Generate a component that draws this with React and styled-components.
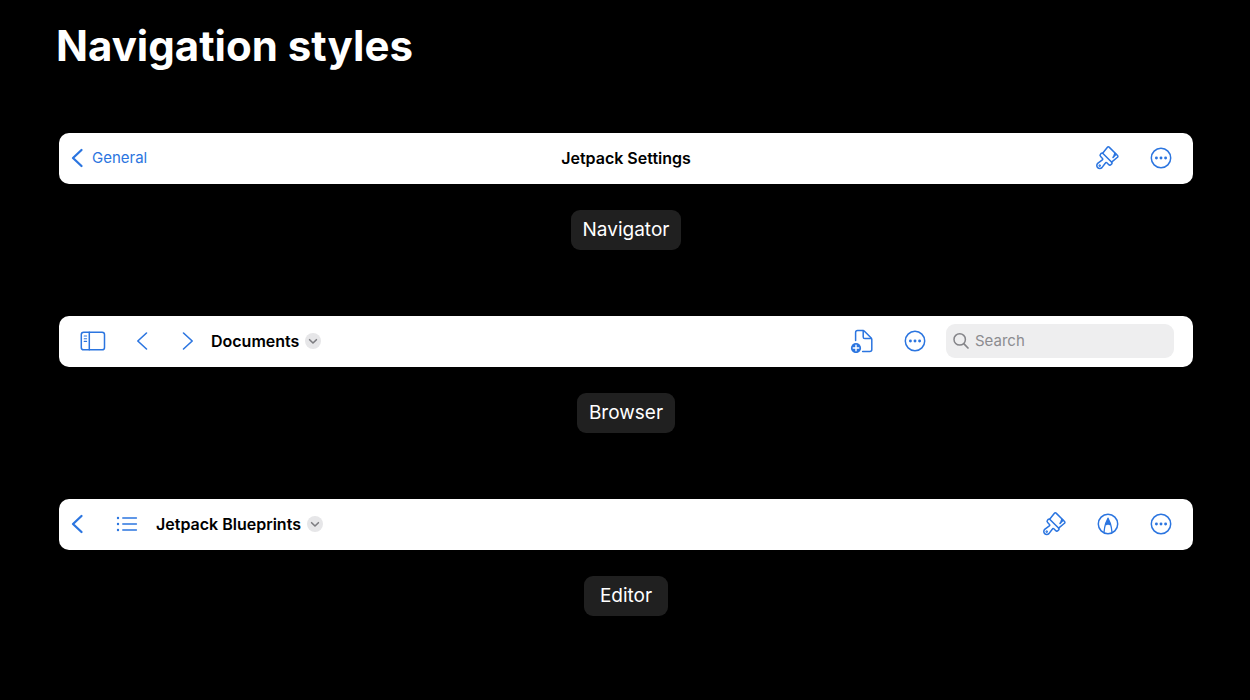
import React from "react";
import styled, { createGlobalStyle } from "styled-components";

const GlobalStyle = createGlobalStyle`
  *, *::before, *::after { box-sizing: border-box; }
  body {
    margin: 0;
    background: #000;
    color: #fff;
    font-family: Inter, "Liberation Sans", sans-serif;
  }
`;

const Page = styled.main`
  padding: 18px 57px 40px 59px;
`;

const Heading = styled.h1`
  margin: 0 0 59px -3px;
  font-size: 42px;
  line-height: 56px;
  font-weight: 700;
`;

const Styles = styled.div`
  display: flex;
  flex-direction: column;
  gap: 66px;
`;

const Example = styled.section`
  display: flex;
  flex-direction: column;
  align-items: center;
  gap: 26px;
`;

const Bar = styled.header`
  align-self: stretch;
  display: grid;
  grid-template-columns: 1fr auto 1fr;
  align-items: center;
  min-height: 51px;
  padding: 0 11px 2px;
  border-radius: 10px;
  background: #fff;
  color: #000;
`;

const Group = styled.div`
  display: flex;
  align-items: center;
  gap: ${(p) => p.$gap || 0}px;
  padding-left: ${(p) => p.$inset || 0}px;
  padding-right: ${(p) => p.$endInset || 0}px;
  justify-content: ${(p) => (p.$end ? "flex-end" : "flex-start")};
`;

const BarTitle = styled.h2`
  margin: 0;
  font-size: 16px;
  line-height: 24px;
  font-weight: 600;
  white-space: nowrap;
`;

const IconButton = styled.button`
  display: flex;
  align-items: center;
  padding: 0;
  border: 0;
  background: none;
  color: #2b75e0;
  cursor: pointer;
`;

const BackLink = styled.a`
  display: flex;
  align-items: center;
  gap: 8px;
  color: #2b75e0;
  font-size: 15px;
  line-height: 24px;
  text-decoration: none;
`;

const TitleMenu = styled.button`
  display: flex;
  align-items: center;
  gap: 6px;
  padding: 0;
  border: 0;
  background: none;
  color: #000;
  font: 600 16px/24px Inter, "Liberation Sans", sans-serif;
  white-space: nowrap;
  cursor: pointer;
`;

const Search = styled.label`
  display: flex;
  align-items: center;
  gap: 6px;
  width: 228px;
  height: 34px;
  padding: 0 7px;
  border-radius: 9px;
  background: #eeeeef;
  color: #848488;
`;

const SearchInput = styled.input`
  width: 100%;
  min-width: 0;
  padding: 0;
  border: 0;
  outline: 0;
  background: none;
  color: #000;
  font: 400 15px/24px Inter, "Liberation Sans", sans-serif;
  &::placeholder { color: #8c8c90; opacity: 1; }
`;

const Tag = styled.p`
  margin: 0;
  min-width: 84px;
  padding: 0 12px;
  border-radius: 9px;
  background: #202020;
  font-size: 19px;
  line-height: 40px;
  text-align: center;
`;

const Drawing = styled.svg`
  display: block;
  flex: none;
  fill: none;
  stroke: currentColor;
  stroke-width: ${(p) => p.$weight || 1.5};
  stroke-linecap: round;
  stroke-linejoin: round;
`;

function Icon({ w, h, weight, children }) {
  return (
    <Drawing width={w} height={h} viewBox={`0 0 ${w} ${h}`} $weight={weight} aria-hidden="true">
      {children}
    </Drawing>
  );
}

const BackIcon = () => (
  <Icon w={14} h={20} weight={2.3}>
    <path d="M11.5 2 3 10l8.500 8" />
  </Icon>
);

const PreviousIcon = () => (
  <Icon w={12} h={20} weight={1.6}>
    <path d="M10.500 2 1.800 10l8.700 8" />
  </Icon>
);

const NextIcon = () => (
  <Icon w={12} h={20} weight={1.6}>
    <path d="m1.500 2 8.700 8-8.700 8" />
  </Icon>
);

const BrushIcon = () => (
  <Icon w={24} h={26} weight={1.5}>
    <g transform="translate(11.300 13) rotate(45)">
      <path d="M-6 -.8l-.8-7.600c-.1-.8.4-1.300 1.100-1.300H6.200c.8 0 1.300.6 1.200 1.300l-.7 7.600" />
      <path d="M-5.900-.8H6.900c.7 0 1.100.4 1.100 1.100v.9c0 1.100-.7 1.800-1.800 1.800H3.800c-.7 0-1 .5-.9 1.100l.8 5.800a3 3 0 1 1-6 0l.8-5.800c.1-.6-.2-1.100-.9-1.100h-2.600c-1.100 0-1.800-.7-1.800-1.800v-.9c0-.7.300-1.100.9-1.100z" />
      <path d="M4.300-9.500v4.300M4.300-6.300 2.600-9.500" />
      <circle cx="0.700" cy="10" r="0.500" />
    </g>
  </Icon>
);

const MoreIcon = () => (
  <Icon w={22} h={22}>
    <circle cx="11" cy="11" r="9.700" />
    <g fill="currentColor" stroke="none">
      <circle cx="6.400" cy="11" r="1.450" />
      <circle cx="11" cy="11" r="1.450" />
      <circle cx="15.600" cy="11" r="1.450" />
    </g>
  </Icon>
);

const SidebarIcon = () => (
  <Icon w={26} h={20}>
    <rect x="1.300" y="1.200" width="23.200" height="17.600" rx="2.400" />
    <path d="M9.300 1.200v17.600" />
    <path d="M4.200 5h2.400M4.200 7.700h2.400M4.200 10.400h2.400" strokeWidth="1.100" />
  </Icon>
);

const NewDocumentIcon = () => (
  <Icon w={24} h={24}>
    <path d="M6.600 11.500V3.400c0-1.200.8-2 2-2h5.200c.6 0 1 .2 1.400.6l7 7c.4.400.6.9.6 1.500v10.100c0 1.200-.8 2-2 2h-7.200" />
    <path d="M14.200 1.600v6.400c0 1 .6 1.600 1.600 1.600h6.400" />
    <circle cx="7" cy="19" r="5.100" fill="currentColor" stroke="none" />
    <path d="M7 16.200v5.600M4.200 19h5.600" stroke="#fff" strokeWidth="1.400" />
  </Icon>
);

const ListIcon = () => (
  <Icon w={22} h={18}>
    <path d="M6.800 3h13.600M6.800 9h13.600M6.800 15h13.600" />
    <g fill="currentColor" stroke="none">
      <circle cx="2" cy="3" r="1.200" />
      <circle cx="2" cy="9" r="1.200" />
      <circle cx="2" cy="15" r="1.200" />
    </g>
  </Icon>
);

const MarkupIcon = () => (
  <Icon w={22} h={22}>
    <circle cx="11" cy="11" r="9.700" />
    <path d="M7 19.400c.3-3.400 1-7 1.700-9.200L11 5.200l2.300 5c.7 2.200 1.400 5.800 1.700 9.200" strokeWidth="1.300" />
    <path d="M11 5 8.300 11.600c.9.700 1.800.7 2.700 0 .9.700 1.800.7 2.700 0z" fill="currentColor" stroke="none" />
  </Icon>
);

const SearchIcon = () => (
  <Icon w={16} h={18}>
    <circle cx="6.700" cy="7.400" r="5.700" />
    <path d="m11 11.800 4 4.200" strokeWidth="1.700" />
  </Icon>
);

const DisclosureIcon = () => (
  <Icon w={16} h={16} weight={1.6}>
    <circle cx="8" cy="8" r="8" fill="#e6e6e8" stroke="none" />
    <path d="M4.600 6.700 8 10l3.400-3.300" stroke="#7c7c80" />
  </Icon>
);

function Action({ label, children }) {
  return (
    <IconButton type="button" aria-label={label}>
      {children}
    </IconButton>
  );
}

export default function App() {
  return (
    <>
      <GlobalStyle />
      <Page>
        <Heading>Navigation styles</Heading>
        <Styles>
          <Example>
            <Bar>
              <Group>
                <BackLink href="#general">
                  <BackIcon />
                  General
                </BackLink>
              </Group>
              <BarTitle>Jetpack Settings</BarTitle>
              <Group $end $gap={31} $endInset={10}>
                <Action label="Format"><BrushIcon /></Action>
                <Action label="More"><MoreIcon /></Action>
              </Group>
            </Bar>
            <Tag>Navigator</Tag>
          </Example>

          <Example>
            <Bar>
              <Group $inset={10}>
                <Group $gap={30}>
                  <Action label="Show sidebar"><SidebarIcon /></Action>
                  <Group $gap={34}>
                    <Action label="Previous"><PreviousIcon /></Action>
                    <Action label="Next"><NextIcon /></Action>
                  </Group>
                </Group>
                <Group $inset={17}>
                  <TitleMenu type="button">
                    Documents
                    <DisclosureIcon />
                  </TitleMenu>
                </Group>
              </Group>
              <span />
              <Group $end $gap={20} $endInset={8}>
                <Group $gap={31}>
                  <Action label="New document"><NewDocumentIcon /></Action>
                  <Action label="More"><MoreIcon /></Action>
                </Group>
                <Search>
                  <SearchIcon />
                  <SearchInput type="search" placeholder="Search" aria-label="Search" />
                </Search>
              </Group>
            </Bar>
            <Tag>Browser</Tag>
          </Example>

          <Example>
            <Bar>
              <Group $gap={32}>
                <Action label="Back"><BackIcon /></Action>
                <Group $gap={18}>
                  <Action label="Outline"><ListIcon /></Action>
                  <TitleMenu type="button">
                    Jetpack Blueprints
                    <DisclosureIcon />
                  </TitleMenu>
                </Group>
              </Group>
              <span />
              <Group $end $gap={31} $endInset={10}>
                <Action label="Format"><BrushIcon /></Action>
                <Action label="Markup"><MarkupIcon /></Action>
                <Action label="More"><MoreIcon /></Action>
              </Group>
            </Bar>
            <Tag>Editor</Tag>
          </Example>
        </Styles>
      </Page>
    </>
  );
}
